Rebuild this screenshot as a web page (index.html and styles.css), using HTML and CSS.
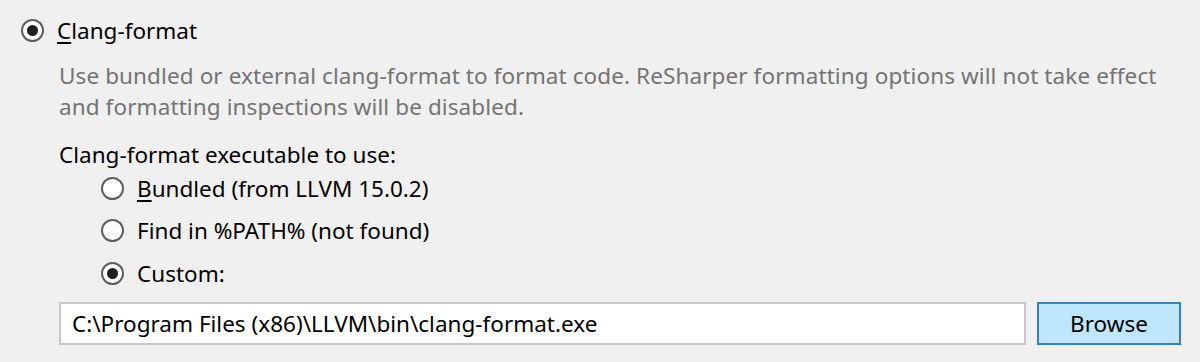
FILE: index.html
```html
<!DOCTYPE html>
<html lang="en">
<head>
    <meta charset="UTF-8">
    <title>Clang-format settings</title>
    <link rel="stylesheet" href="styles.css">
</head>
<body>
    <div class="panel">
        <label class="radio top">
            <span class="dot checked"></span>
            <span><u>C</u>lang-format</span>
        </label>

        <div class="section">
            <p class="hint">Use bundled or external clang-format to format code. ReSharper formatting options will not take effect and formatting inspections will be disabled.</p>

            <div class="caption">Clang-format executable to use:</div>

            <div class="options">
                <label class="radio">
                    <span class="dot"></span>
                    <span><u>B</u>undled (from LLVM 15.0.2)</span>
                </label>
                <label class="radio">
                    <span class="dot"></span>
                    <span>Find in %PATH% (not found)</span>
                </label>
                <label class="radio">
                    <span class="dot checked"></span>
                    <span>Custom:</span>
                </label>
            </div>

            <div class="path-row">
                <div class="path-box">C:\Program Files (x86)\LLVM\bin\clang-format.exe</div>
                <button class="browse">Browse</button>
            </div>
        </div>
    </div>
</body>
</html>
```

FILE: styles.css
```css
body {
    margin: 0;
    background: #f0f0f0;
    font-family: 'Noto Sans', 'Open Sans', sans-serif;
    font-size: 22.5px;
    color: #000;
}

.panel {
    padding: 14px 19px 0 21px;
}

.radio {
    display: flex;
    align-items: center;
    gap: 13px;
    height: 32px;
}

.radio u {
    text-underline-offset: 3px;
}

.dot {
    width: 19px;
    height: 19px;
    border: 2px solid #5e5e5e;
    border-radius: 50%;
    background: #fff;
    display: flex;
    align-items: center;
    justify-content: center;
    flex-shrink: 0;
}

.dot.checked::after {
    content: "";
    width: 11px;
    height: 11px;
    border-radius: 50%;
    background: #1f1f1f;
}

.section {
    padding-left: 38px;
}

.hint {
    margin: 14px 0 0;
    color: #747474;
    line-height: 31px;
    letter-spacing: 0.1px;
    max-width: 1120px;
}

.caption {
    margin-top: 17px;
    line-height: 31px;
}

.options {
    display: flex;
    flex-direction: column;
    gap: 10.5px;
    padding-left: 42px;
    margin-top: 2px;
}

.path-row {
    display: flex;
    gap: 11px;
    margin-top: 13px;
}

.path-box {
    flex: 1;
    height: 39px;
    border: 2px solid #c8c8cc;
    background: #fff;
    padding: 0 11px;
    display: flex;
    align-items: center;
}

.browse {
    width: 144px;
    height: 43px;
    border: 2px solid #3c7fb1;
    background: #bee6fd;
    font: inherit;
    color: #000;
    padding: 0;
}
```
